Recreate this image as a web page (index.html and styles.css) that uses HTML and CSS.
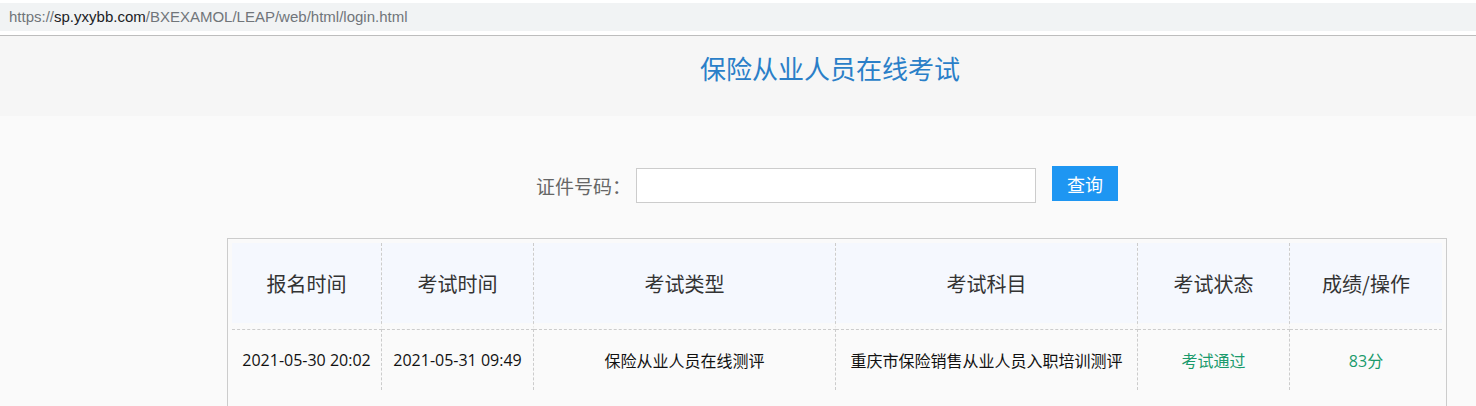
FILE: index.html
```html
<!DOCTYPE html>
<html lang="zh-CN">
<head>
<meta charset="utf-8">
<title>保险从业人员在线考试</title>
<link rel="stylesheet" href="styles.css">
</head>
<body>
<div class="addressbar">
  <div class="url"><span class="dim">https://</span><span class="host">sp.yxybb.com</span><span class="dim">/BXEXAMOL/LEAP/web/html/login.html</span></div>
</div>
<div class="page">
  <header class="banner">
    <h1 class="title">保险从业人员在线考试</h1>
  </header>
  <main class="main">
    <form class="search" onsubmit="return false">
      <label class="search-label" for="idno">证件号码：</label>
      <input class="search-input" id="idno" type="text">
      <button class="search-btn" type="button">查询</button>
    </form>
    <div class="table-box">
      <table class="result">
        <colgroup>
          <col class="c1"><col class="c2"><col class="c3"><col class="c4"><col class="c5"><col class="c6">
        </colgroup>
        <thead>
          <tr>
            <th>报名时间</th>
            <th>考试时间</th>
            <th>考试类型</th>
            <th>考试科目</th>
            <th>考试状态</th>
            <th>成绩/操作</th>
          </tr>
        </thead>
        <tbody>
          <tr>
            <td>2021-05-30 20:02</td>
            <td>2021-05-31 09:49</td>
            <td>保险从业人员在线测评</td>
            <td>重庆市保险销售从业人员入职培训测评</td>
            <td class="ok">考试通过</td>
            <td class="ok">83分</td>
          </tr>
        </tbody>
      </table>
    </div>
  </main>
</div>
</body>
</html>
```
FILE: styles.css
```css
* { box-sizing: border-box; }
html, body { margin: 0; padding: 0; }
body {
  background: #fafafa;
  font-family: "Open Sans", "Noto Sans CJK SC", sans-serif;
  color: #333;
}
.addressbar {
  background: #ffffff;
  padding-top: 3px;
  height: 36px;
  border-bottom: 1px solid #bdbdbd;
}
.url {
  background: #f1f3f4;
  height: 28px;
  padding-left: 9px;
  font-family: "Liberation Sans", "Noto Sans", sans-serif;
  font-size: 15px;
  line-height: 28px;
  color: #202124;
}
.url .dim { color: #70757a; }
.url .host { color: #202124; }
.page { background: #fafafa; }
.banner {
  background: #f6f6f6;
  height: 80px;
  padding-top: 14px;
  padding-left: 184px;
  text-align: center;
}
.title {
  margin: 0;
  font-family: "Noto Sans CJK SC", sans-serif;
  font-weight: normal;
  font-size: 26px;
  line-height: 36px;
  color: #2a7fc8;
}
.main { padding-top: 50px; padding-bottom: 40px; }
.search {
  display: flex;
  justify-content: center;
  align-items: flex-start;
  padding-left: 178px;
  margin: 0;
}
.search-label {
  font-family: "Noto Sans CJK SC", sans-serif;
  font-size: 19px;
  line-height: 35px;
  margin-top: 2px;
  color: #666;
}
.search-input {
  width: 400px;
  height: 35px;
  margin: 2px 0 0 5px;
  border: 1px solid #ccc;
  background: #fff;
  outline: none;
}
.search-btn {
  margin-left: 16px;
  width: 66px;
  height: 35px;
  border: 0;
  background: #1e96f2;
  color: #fff;
  font-family: "Noto Sans CJK SC", sans-serif;
  font-size: 18px;
  padding: 0;
}
.table-box {
  width: 1220px;
  margin: 35px 0 0 227px;
  border: 1px solid #ccc;
  padding: 4px 4px 40px 4px;
  background: #fafafa;
}
.result {
  width: 1210px;
  table-layout: fixed;
  border-collapse: separate;
  border-spacing: 0;
}
.result .c1 { width: 150px; }
.result .c2 { width: 152px; }
.result .c3 { width: 302px; }
.result .c4 { width: 302px; }
.result .c5 { width: 152px; }
.result .c6 { width: 152px; }
.result th {
  height: 86px;
  padding: 0;
  background: #f5f8fe;
  background-clip: padding-box;
  border-bottom: 6px solid transparent;
  border-right: 1px dashed #ccc;
  font-family: "Noto Sans CJK SC", sans-serif;
  font-weight: normal;
  font-size: 20px;
  color: #333;
}
.result td {
  height: 61px;
  padding: 0;
  border-top: 1px dashed #ccc;
  border-right: 1px dashed #ccc;
  text-align: center;
  font-size: 16px;
  color: #111;
  white-space: nowrap;
}
.result th:last-child, .result td:last-child { border-right: 0; }
.result td.ok { color: #1a9a6c; }
```
